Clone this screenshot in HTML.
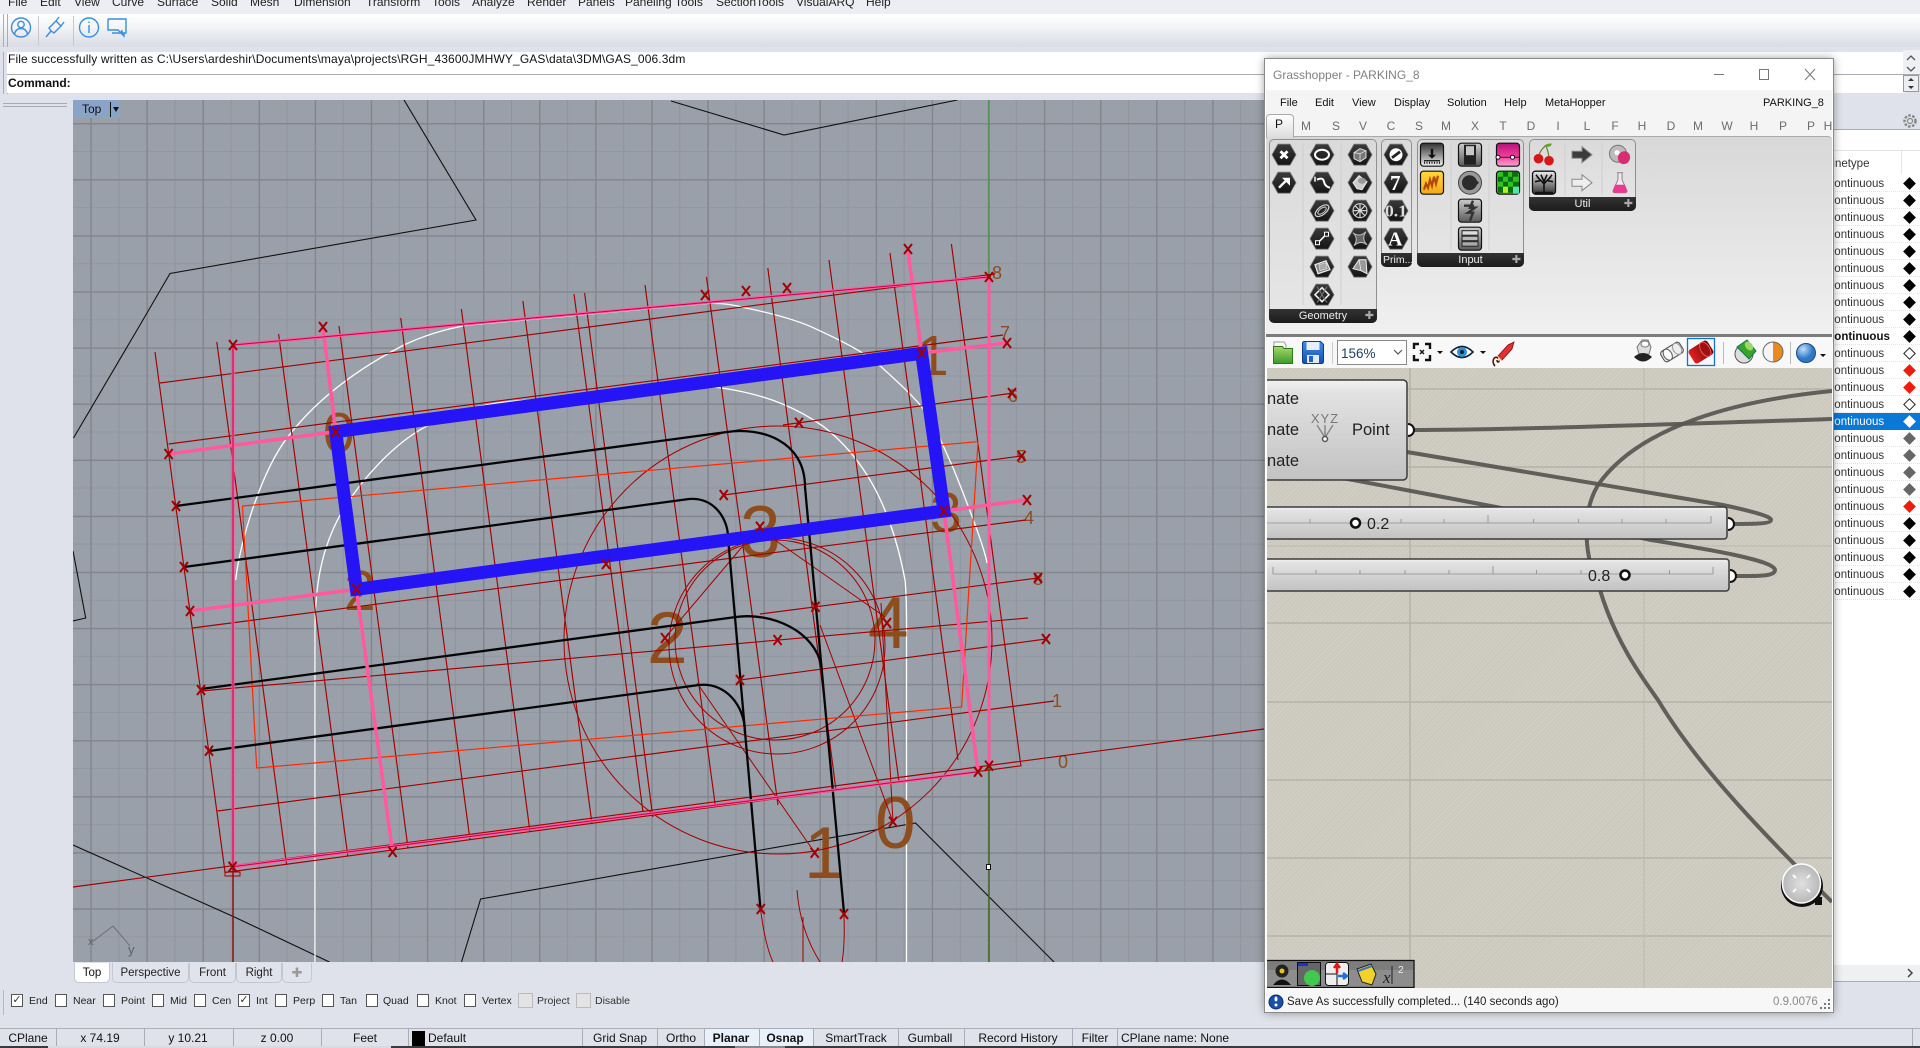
<!DOCTYPE html>
<html><head><meta charset="utf-8"><title>Rhino</title>
<style>
html,body{margin:0;padding:0;width:1920px;height:1048px;overflow:hidden;background:#dfe2ea;font-family:"Liberation Sans",sans-serif;font-size:12px;color:#111}
.a{position:absolute}
.t{position:absolute;white-space:nowrap;line-height:14px;height:14px}
.c{transform:translateX(-50%)}
.m{top:-5px;color:#222}
.cb{position:absolute;top:994px;width:12px;height:13px;border:1px solid #555;background:#fff;box-sizing:border-box;font-size:11px;line-height:11px;text-align:center;color:#333}
.cb.g{background:#e3e3e3;border-color:#bbb;width:15px;height:15px;top:993px}
.l{position:absolute;top:994px;font-size:10.5px;line-height:14px;white-space:nowrap;color:#222}
.s{position:absolute;top:1029px;width:1px;height:17px;background:#a9adb8}
.st{position:absolute;top:1031px;line-height:14px;white-space:nowrap;color:#111;transform:translateX(-50%)}
.r{position:absolute;left:1826px;width:94px;height:17px;box-sizing:border-box;border-bottom:1px dotted #e2e2e2;font-size:11.5px;line-height:19px;color:#333;white-space:nowrap}
.d{position:absolute;left:79px;top:4px;width:9px;height:9px;transform:rotate(45deg);box-sizing:border-box;background:#000}
.w{background:#fff;border:1px solid #222}.e{background:#f01b0c}.y{background:#666}
.tab{position:absolute;top:963px;height:20px;box-sizing:border-box;border:1px solid #c3c7d2;border-top:0;border-radius:0 0 5px 5px;text-align:center;line-height:21px;font-size:11.5px;color:#222;background:#e0e3ec}
.gt{position:absolute;top:119px;font-size:12px;line-height:14px;color:#6d6d6d;transform:translateX(-50%)}
.gm{position:absolute;top:96px;font-size:11px;line-height:14px;color:#111;white-space:nowrap}
.pn{position:absolute;box-sizing:border-box;border:1px solid #8f8f8f;border-radius:5px;background:linear-gradient(#dadada,#e6e6e6)}
.pf{position:absolute;left:-1px;right:-1px;bottom:-1px;height:14px;background:linear-gradient(#333,#1c1c1c);border-radius:0 0 5px 5px;color:#eee;font-size:11px;line-height:14px;text-align:center}
</style></head><body>

<!-- Menu -->
<div class="a" style="left:0;top:0;width:1920px;height:14px;background:#eceef3"></div>
<span class="t m" style="left:8px">File</span><span class="t m" style="left:40px">Edit</span><span class="t m" style="left:74px">View</span><span class="t m" style="left:112px">Curve</span><span class="t m" style="left:157px">Surface</span><span class="t m" style="left:211px">Solid</span><span class="t m" style="left:250px">Mesh</span><span class="t m" style="left:294px">Dimension</span><span class="t m" style="left:366px">Transform</span><span class="t m" style="left:432px">Tools</span><span class="t m" style="left:472px">Analyze</span><span class="t m" style="left:527px">Render</span><span class="t m" style="left:578px">Panels</span><span class="t m" style="left:625px">Paneling Tools</span><span class="t m" style="left:716px">SectionTools</span><span class="t m" style="left:796px">VisualARQ</span><span class="t m" style="left:866px">Help</span>

<!-- Toolbar -->
<div class="a" style="left:0;top:14px;width:1920px;height:33px;background:linear-gradient(#fff,#f3f4f7 40%,#d8dbe2)"></div>
<div class="a" style="left:3px;top:14px;width:3px;height:33px;border-left:1px solid #aab;border-right:1px solid #aab"></div>
<div class="a" style="left:38px;top:16px;width:1px;height:29px;background:#c5c8d0"></div>
<div class="a" style="left:73px;top:16px;width:1px;height:29px;background:#c5c8d0"></div>
<svg class="a" style="left:8px;top:14px" width="130" height="32" viewBox="8 14 130 32" fill="none" stroke="#3b8edb" stroke-width="1.4">
<circle cx="21" cy="27.5" r="9.5"/><circle cx="21" cy="24.5" r="3.2"/><path d="M14.5 34c1-4 3-5.500 6.500-5.500s5.500 1.500 6.500 5.500"/>
<path d="M46 37l5-6M51 31l-2-3 7-7 5 5-7 7zM56 21l3-4M61 26l3-4"/>
<circle cx="89" cy="27.500" r="9.500"/><path d="M89 25v8M89 21.500v1.500"/>
<path d="M108 19h18v14h-4v-2M108 19v11h10l3 3 1-3"/><path d="M112 33h9l3 3v-3"/></svg>

<!-- command -->
<div class="a" style="left:3px;top:52px;width:3px;height:42px;border-left:1px solid #aab;border-right:1px solid #aab"></div>
<div class="a" style="left:7px;top:52px;width:1898px;height:41px;background:#fff"></div>
<div class="a" style="left:7px;top:74px;width:1913px;height:1px;background:#a7abb6"></div>
<span class="t" style="left:8px;top:52px;letter-spacing:.12px">File successfully written as C:\Users\ardeshir\Documents\maya\projects\RGH_43600JMHWY_GAS\data\3DM\GAS_006.3dm</span>
<span class="t" style="left:8px;top:76px;font-weight:bold">Command:</span>
<svg class="a" style="left:1903px;top:50px" width="17" height="44" viewBox="0 0 17 44" fill="none" stroke="#555" stroke-width="1.300"><rect x="0" y="0" width="17" height="24" fill="#eef0f4" stroke="none"/><path d="M4 10l4-4 4 4M4 17l4 4 4-4"/><rect x="0.500" y="25.500" width="15" height="16" fill="#eceef2" stroke="#999" stroke-width="1"/><path d="M5 31l3-3 3 3z M5 36l3 3 3-3z" fill="#333" stroke="none"/></svg>

<!-- Viewport grip -->
<div class="a" style="left:3px;top:103px;width:64px;height:2px;border-top:1px solid #a7abb6;border-bottom:1px solid #a7abb6"></div>

<!-- Viewport -->
<div class="a" style="left:73px;top:100px;width:1195px;height:862px;overflow:hidden;background-color:#9aa0a9;background-image:linear-gradient(90deg,#83868f 1.500px,transparent 1.500px),linear-gradient(#83868f 1.500px,transparent 1.500px),linear-gradient(90deg,#8f939c 1px,transparent 1px),linear-gradient(#92969f 1px,transparent 1px);background-size:56.100px 56.100px;background-position:17.300px 0,0 23px,45.350px 0,0 51px">
<svg width="1195" height="862" viewBox="73 100 1195 862" style="position:absolute;left:0;top:0" fill="none">
<defs><path id="x" d="M-4-5L4 5M4-5L-4 5" stroke="#a00000" stroke-width="2"/></defs>
<!-- thin black -->
<g stroke="#111" stroke-width="1.100">
<path d="M404 100L476 220L170 273.500L140 325L73.500 438"/>
<path d="M671 101L784 135L957.500 100"/>
<path d="M73 551L85.700 618L73 621"/>
<path d="M73 845L233.800 916.700L329.400 962"/>
<path d="M461.500 962L480.600 899L915.500 823L1054 962"/>
</g>
<!-- axes -->
<path d="M989 100V277" stroke="#3f9a42" stroke-width="1.300"/>
<path d="M989 766V962" stroke="#3a6a20" stroke-width="1.500"/>
<path d="M233 867V962" stroke="#8c0f0f" stroke-width="1.500"/>
<!-- axis icon -->
<path d="M113 926L92 942M113 926L130 946" stroke="#6c7078" stroke-width="1"/>
<text x="88" y="945" font-size="11" font-family="Liberation Sans" fill="#5c6068">x</text><text x="128" y="954" font-size="13" font-family="Liberation Sans" fill="#5c6068">y</text>
<!-- white arcs -->
<g stroke="#fff" stroke-width="1.300">
<path d="M315 962V630C315 590 320 550 342 511.700C362 478 395 443 425.700 426.700C470 404 500 402 529 400C600 395 670 380 721.600 388C770 395 800 410 823.700 426.700C860 455 890 500 905 580C907 600 906.500 620 906.500 640V962"/>
<path d="M235.700 580C240 540 262 470 288 436.700C320 395 365 365 404 345C425 335 445 329 468.600 325L701 304C720 302 735 305 746 308C780 315 800 322 811 326.700C840 340 865 352 881 366.700C900 384 912 395 921.600 406.700C935 425 945 450 954 470C970 510 985 550 987 563"/>
</g>
<!-- digits -->
<g font-family="Liberation Sans" fill="#8c4d1f">
<g font-size="57"><text x="323" y="452">0</text><text x="917" y="375">1</text><text x="344" y="610">2</text><text x="930" y="532">3</text></g>
<g font-size="73"><text x="740" y="557">3</text><text x="647" y="663">2</text><text x="868" y="648">4</text><text x="804" y="878">1</text><text x="875" y="848">0</text></g>
<g font-size="18"><text x="992" y="279">8</text><text x="1000" y="339">7</text><text x="1008" y="402">6</text><text x="1016" y="463">5</text><text x="1024" y="524">4</text><text x="1033" y="585">8</text><text x="1052" y="707">1</text><text x="1058" y="768">0</text></g>
</g>
<!-- dark red grid -->
<g stroke="#a30000" stroke-width="1.150">
<path d="M160 383L995 274"/><path d="M168.600 444L1003 335"/><path d="M783 425L1013.500 393"/><path d="M723.700 495L1021.600 456"/><path d="M192.400 628L1025.700 520"/><path d="M201 691L1028 618"/><path d="M760 614L1038 578"/><path d="M740 680L1046 639"/><path d="M217.700 811L1054 701"/><path d="M73 887L1264 729"/><path d="M225 872.500L1021.600 765.700"/>
<path d="M155 352L225 872"/><path d="M216.800 342L286.600 865"/><path d="M278.600 334L347.800 856"/><path d="M339 326L408 848"/><path d="M400.700 318L470 840"/><path d="M461.400 309L530 832"/><path d="M522.900 301L592 824"/><path d="M574 294L643 812"/><path d="M584.600 293L652.800 817"/><path d="M645 285L715.500 807"/><path d="M706.500 277L778 805"/><path d="M767.800 268L836 790"/><path d="M829 260L899 782"/><path d="M890 253L958 760"/><path d="M951.400 244L1020.800 765"/>
<path d="M225 872H240V876H225Z" stroke-width="1"/>
<circle cx="778" cy="640" r="214" stroke-width="1"/><circle cx="777" cy="646" r="108" stroke-width="1"/><circle cx="775" cy="640" r="100" stroke-width="1"/>
<path d="M697 683L815 853M775 540L885 617M742 547L665 638M881 603L893 822M820 625L893 822" stroke-width="1"/>
<path d="M760.400 908Q765 945 773 962M844 915Q845 945 842 962M803 917V962M797 890Q800 930 820 962" stroke-width="1"/>
</g>
<!-- orange rectangle -->
<path d="M242.500 506L978 441.700L961.600 707L256.700 768Z" stroke="#ff2a00" stroke-width="1.200"/>
<!-- black thick -->
<g stroke="#050505" stroke-width="2.300" stroke-linejoin="round">
<path d="M175.700 506L727 432C760 427 805 440 805 487L844 913"/>
<path d="M184 567L689 499C715 497 728 520 728 537L760.400 908"/>
<path d="M201 689L736 617C770 612 815 630 821.600 667"/>
<path d="M209 751L699 685C725 682 745 705 745 733"/>
</g>
<!-- pink lines -->
<g stroke="#ff5a9e" stroke-width="3.600">
<path d="M323 327L335.700 431.700M356.400 589L392.600 852M907.800 250L921.600 353M944 511L978 771.700M168.600 454L335.700 431.700M190 611L356.400 589.300M921.600 353L1007 343M944 511L1025.700 500"/>
<path d="M233 345L989 277M232.600 866.700L978 771.700M989 277V766M233 345V867" stroke-width="3"/>
</g>
<g stroke="#c4004a" stroke-width="1"><path d="M233 345L989 277M232.600 866.700L978 771.700M233 345V867"/></g>
<!-- blue rectangle -->
<path d="M335.700 431.700L921.600 353.300L944 511L356.400 589.300Z" stroke="#2414f6" stroke-width="13" stroke-linejoin="miter"/>
<!-- crosses -->
<g><use href="#x" x="233" y="345"/><use href="#x" x="323" y="327"/><use href="#x" x="168.600" y="454"/><use href="#x" x="176" y="506"/><use href="#x" x="184" y="567"/><use href="#x" x="190" y="611"/><use href="#x" x="335.700" y="431.700"/><use href="#x" x="356.400" y="589"/><use href="#x" x="232.600" y="866.700"/><use href="#x" x="392.600" y="852"/><use href="#x" x="606" y="564"/><use href="#x" x="705" y="295"/><use href="#x" x="746" y="291"/><use href="#x" x="787" y="288"/><use href="#x" x="908" y="249"/><use href="#x" x="989" y="277"/><use href="#x" x="1007" y="343"/><use href="#x" x="921.600" y="353"/><use href="#x" x="1012" y="393"/><use href="#x" x="799" y="422.700"/><use href="#x" x="1021.600" y="456"/><use href="#x" x="723.700" y="495"/><use href="#x" x="944" y="511"/><use href="#x" x="1027" y="500"/><use href="#x" x="1038" y="578"/><use href="#x" x="815.500" y="606.700"/><use href="#x" x="887" y="623"/><use href="#x" x="760" y="526.700"/><use href="#x" x="665" y="638"/><use href="#x" x="777.600" y="640"/><use href="#x" x="740" y="680"/><use href="#x" x="1046" y="639"/><use href="#x" x="989" y="765.700"/><use href="#x" x="978" y="771.700"/><use href="#x" x="893" y="821.700"/><use href="#x" x="814.700" y="852.700"/><use href="#x" x="760.800" y="909"/><use href="#x" x="844" y="914"/><use href="#x" x="201" y="690"/><use href="#x" x="209" y="750.700"/></g>
<rect x="986.500" y="864.500" width="4" height="5" fill="#fff" stroke="#111" stroke-width="1"/>
</svg>
<div class="a" style="left:0;top:0;width:47px;height:18px;background:#8aa4c8"></div>
<span class="t" style="left:9px;top:2px;color:#111">Top</span>
<div class="a" style="left:37px;top:2px;width:1px;height:15px;background:#111"></div>
<div class="a" style="left:40px;top:7px;border:3.500px solid transparent;border-top:5px solid #111"></div>
</div>

<!-- viewport tabs -->
<div class="tab" style="left:74px;width:36px;background:#fff;color:#111">Top</div>
<div class="tab" style="left:112px;width:77px">Perspective</div>
<div class="tab" style="left:189px;width:47px">Front</div>
<div class="tab" style="left:236px;width:46px">Right</div>
<div class="tab" style="left:282px;width:30px;font-size:13px;line-height:20px;color:#999">✚</div>

<!-- osnap -->
<div class="a" style="left:3px;top:990px;width:2px;height:25px;border-left:1px solid #b5b8c2"></div>
<div class="cb" style="left:11px">✓</div><span class="l" style="left:29px">End</span>
<div class="cb" style="left:55px"></div><span class="l" style="left:73px">Near</span>
<div class="cb" style="left:103px"></div><span class="l" style="left:121px">Point</span>
<div class="cb" style="left:152px"></div><span class="l" style="left:170px">Mid</span>
<div class="cb" style="left:194px"></div><span class="l" style="left:212px">Cen</span>
<div class="cb" style="left:238px">✓</div><span class="l" style="left:256px">Int</span>
<div class="cb" style="left:275px"></div><span class="l" style="left:293px">Perp</span>
<div class="cb" style="left:322px"></div><span class="l" style="left:340px">Tan</span>
<div class="cb" style="left:366px"></div><span class="l" style="left:383px">Quad</span>
<div class="cb" style="left:417px"></div><span class="l" style="left:435px">Knot</span>
<div class="cb" style="left:464px"></div><span class="l" style="left:482px">Vertex</span>
<div class="cb g" style="left:518px"></div><span class="l" style="left:537px;color:#333">Project</span>
<div class="cb g" style="left:576px"></div><span class="l" style="left:595px;color:#333">Disable</span>

<!-- status bar -->
<div class="a" style="left:0;top:1028px;width:1920px;height:1px;background:#a9adb8"></div>
<div class="a" style="left:704px;top:1029px;width:109px;height:17px;background:#e8f1fa"></div>
<div class="s" style="left:56px"></div><div class="s" style="left:144px"></div><div class="s" style="left:233px"></div><div class="s" style="left:321px"></div><div class="s" style="left:408px"></div><div class="s" style="left:582px"></div><div class="s" style="left:657px"></div><div class="s" style="left:704px"></div><div class="s" style="left:759px"></div><div class="s" style="left:813px"></div><div class="s" style="left:898px"></div><div class="s" style="left:964px"></div><div class="s" style="left:1072px"></div><div class="s" style="left:1117px"></div><div class="s" style="left:1912px"></div>
<span class="st" style="left:28px">CPlane</span><span class="st" style="left:100px">x 74.19</span><span class="st" style="left:188px">y 10.21</span><span class="st" style="left:277px">z 0.00</span><span class="st" style="left:365px">Feet</span>
<div class="a" style="left:412px;top:1031px;width:13px;height:15px;background:#000"></div>
<span class="st" style="left:428px;transform:none">Default</span>
<span class="st" style="left:620px">Grid Snap</span><span class="st" style="left:681px">Ortho</span><span class="st" style="left:731px;font-weight:bold">Planar</span><span class="st" style="left:785px;font-weight:bold">Osnap</span><span class="st" style="left:856px">SmartTrack</span><span class="st" style="left:930px">Gumball</span><span class="st" style="left:1018px">Record History</span><span class="st" style="left:1095px">Filter</span><span class="st" style="left:1121px;transform:none">CPlane name: None</span>
<div class="a" style="left:0;top:1046px;width:1920px;height:2px;background:#3a3a3c"></div>
<div class="a" style="left:48px;top:1046px;width:343px;height:2px;background:#d8dae0"></div>
<div class="a" style="left:735px;top:1046px;width:50px;height:2px;background:#8a8a8c"></div>

<!-- Right panel -->
<div class="a" style="left:1820px;top:129px;width:100px;height:1px;background:#a9adb8"></div>
<div class="a" style="left:1820px;top:130px;width:100px;height:851px;background:#fff"></div>
<div class="a" style="left:1820px;top:150px;width:100px;height:1px;background:#e4e4e4"></div>
<div class="a" style="left:1901px;top:150px;width:1px;height:24px;background:#e4e4e4"></div>
<div class="a" style="left:1820px;top:965px;width:100px;height:16px;background:#eff0f1"></div>
<div class="a" style="left:1820px;top:981px;width:100px;height:1px;background:#a9adb8"></div>
<svg class="a" style="left:1905px;top:968px" width="10" height="10" fill="none" stroke="#444" stroke-width="1.500"><path d="M3 1l4 4-4 4"/></svg>
<svg class="a" style="left:1902px;top:113px" width="16" height="16" fill="none" stroke="#888" stroke-width="1.200"><circle cx="8" cy="8" r="2.500"/><circle cx="8" cy="8" r="5.500" stroke-dasharray="2.500 1.500" stroke-width="2.500"/></svg>
<span class="t" style="left:1826px;top:157px;font-size:11.5px;color:#333">Linetype</span>
<div class="r" style="top:175px">Continuous<i class="d"></i></div>
<div class="r" style="top:192px">Continuous<i class="d"></i></div>
<div class="r" style="top:209px">Continuous<i class="d"></i></div>
<div class="r" style="top:226px">Continuous<i class="d"></i></div>
<div class="r" style="top:243px">Continuous<i class="d"></i></div>
<div class="r" style="top:260px">Continuous<i class="d"></i></div>
<div class="r" style="top:277px">Continuous<i class="d"></i></div>
<div class="r" style="top:294px">Continuous<i class="d"></i></div>
<div class="r" style="top:311px">Continuous<i class="d"></i></div>
<div class="r" style="top:328px;font-weight:bold;color:#111">Continuous<i class="d"></i></div>
<div class="r" style="top:345px">Continuous<i class="d w"></i></div>
<div class="r" style="top:362px">Continuous<i class="d e"></i></div>
<div class="r" style="top:379px">Continuous<i class="d e"></i></div>
<div class="r" style="top:396px">Continuous<i class="d w"></i></div>
<div class="r" style="top:413px;background:#0a78d7;color:#fff;border:0">Continuous<i class="d" style="background:#fff"></i></div>
<div class="r" style="top:430px">Continuous<i class="d y"></i></div>
<div class="r" style="top:447px">Continuous<i class="d y"></i></div>
<div class="r" style="top:464px">Continuous<i class="d y"></i></div>
<div class="r" style="top:481px">Continuous<i class="d y"></i></div>
<div class="r" style="top:498px">Continuous<i class="d e"></i></div>
<div class="r" style="top:515px">Continuous<i class="d"></i></div>
<div class="r" style="top:532px">Continuous<i class="d"></i></div>
<div class="r" style="top:549px">Continuous<i class="d"></i></div>
<div class="r" style="top:566px">Continuous<i class="d"></i></div>
<div class="r" style="top:583px">Continuous<i class="d"></i></div>

<!-- Grasshopper window -->
<div class="a" style="left:1265px;top:59px;width:568px;height:953px;background:#fff;box-shadow:0 0 9px rgba(0,0,0,.45);outline:1px solid #8a8a8a"></div>
<span class="t" style="left:1273px;top:68px;color:#808080;font-size:12px">Grasshopper - PARKING_8</span>
<svg class="a" style="left:1710px;top:62px" width="112" height="24" fill="none" stroke="#777" stroke-width="1"><path d="M4 12.500H14"/><rect x="49.500" y="7.500" width="9" height="10"/><path d="M95 7l10 11M105 7L95 18"/></svg>
<div class="a" style="left:1266px;top:90px;width:566px;height:24px;background:#f4f4f4"></div>
<span class="gm" style="left:1280px">File</span><span class="gm" style="left:1315px">Edit</span><span class="gm" style="left:1352px">View</span><span class="gm" style="left:1394px">Display</span><span class="gm" style="left:1447px">Solution</span><span class="gm" style="left:1504px">Help</span><span class="gm" style="left:1545px">MetaHopper</span><span class="gm" style="left:1763px">PARKING_8</span>
<div class="a" style="left:1266px;top:114px;width:566px;height:22px;background:#f4f4f4"></div>
<div class="a" style="left:1266px;top:136px;width:566px;height:199px;background:linear-gradient(#d8d8d8,#f0f0f0);border-top:1px solid #aaa;box-sizing:border-box;border-radius:4px 4px 0 0"></div>
<div class="a" style="left:1266px;top:114px;width:28px;height:24px;border:1px solid #aaa;border-bottom:0;border-radius:4px 4px 0 0;box-sizing:border-box;background:linear-gradient(#fff,#dcdcdc)"></div>
<span class="gt" style="left:1279px;top:117px;color:#111">P</span>
<span class="gt" style="left:1306px">M</span><span class="gt" style="left:1336px">S</span><span class="gt" style="left:1363px">V</span><span class="gt" style="left:1391px">C</span><span class="gt" style="left:1419px">S</span><span class="gt" style="left:1446px">M</span><span class="gt" style="left:1475px">X</span><span class="gt" style="left:1503px">T</span><span class="gt" style="left:1531px">D</span><span class="gt" style="left:1558px">I</span><span class="gt" style="left:1587px">L</span><span class="gt" style="left:1615px">F</span><span class="gt" style="left:1642px">H</span><span class="gt" style="left:1671px">D</span><span class="gt" style="left:1698px">M</span><span class="gt" style="left:1727px">W</span><span class="gt" style="left:1754px">H</span><span class="gt" style="left:1783px">P</span><span class="gt" style="left:1811px">P</span><span class="gt" style="left:1828px">H</span>

<div class="pn" style="left:1269px;top:139px;width:108px;height:184px"><div class="pf">Geometry<span style="position:absolute;right:3px;top:0;color:#aaa">✚</span></div></div>
<div class="pn" style="left:1381px;top:139px;width:31px;height:128px"><div class="pf" style="text-align:left;padding-left:2px;font-size:10.500px">Prim...</div></div>
<div class="pn" style="left:1417px;top:139px;width:107px;height:128px"><div class="pf">Input<span style="position:absolute;right:3px;top:0;color:#aaa">✚</span></div></div>
<div class="pn" style="left:1529px;top:139px;width:107px;height:72px"><div class="pf">Util<span style="position:absolute;right:3px;top:0;color:#aaa">✚</span></div></div>

<svg class="a" style="left:1265px;top:136px" width="568" height="232" viewBox="1265 136 568 232" fill="none">
<defs>
<linearGradient id="hg" x1="0" y1="0" x2="0" y2="1"><stop offset="0" stop-color="#3a3a3a"/><stop offset="1" stop-color="#141414"/></linearGradient>
<linearGradient id="sq" x1="0" y1="0" x2="0" y2="1"><stop offset="0" stop-color="#cdcdcd"/><stop offset="1" stop-color="#5a5a5a"/></linearGradient>
<linearGradient id="sq2" x1="0" y1="0" x2="0" y2="1"><stop offset="0" stop-color="#eee"/><stop offset="1" stop-color="#333"/></linearGradient>
<linearGradient id="pk" x1="0" y1="0" x2="0" y2="1"><stop offset="0" stop-color="#b01678"/><stop offset=".5" stop-color="#f0359a"/><stop offset="1" stop-color="#f8a0d0"/></linearGradient>
<linearGradient id="yl" x1="0" y1="0" x2="0" y2="1"><stop offset="0" stop-color="#ffd93a"/><stop offset="1" stop-color="#f5a81a"/></linearGradient>
<linearGradient id="fg" x1="0" y1="0" x2="0" y2="1"><stop offset="0" stop-color="#a6d872"/><stop offset="1" stop-color="#3c9a2a"/></linearGradient>
<linearGradient id="bl" x1="0" y1="0" x2="0" y2="1"><stop offset="0" stop-color="#3f8fe6"/><stop offset="1" stop-color="#154fb0"/></linearGradient>
<linearGradient id="rd" x1="0" y1="0" x2="1" y2="0"><stop offset="0" stop-color="#e42020"/><stop offset="1" stop-color="#6c0808"/></linearGradient>
<linearGradient id="org" x1="0" y1="0" x2="1" y2="0"><stop offset=".5" stop-color="#f4f4f4"/><stop offset=".5" stop-color="#e98a20"/></linearGradient>
<radialGradient id="blb" cx=".35" cy=".3"><stop offset="0" stop-color="#bfe0fa"/><stop offset="1" stop-color="#2f78c8"/></radialGradient>
<polygon id="h" points="-6,-10.500 6,-10.500 12,0 6,10.500 -6,10.500 -12,0" fill="url(#hg)" stroke="#777" stroke-width=".8"/>
<rect id="q" x="-11.500" y="-11.500" width="23" height="23" rx="3" fill="url(#sq)" stroke="#111" stroke-width="1.200"/>
</defs>
<!-- column separators -->
<path d="M1303 143V305M1341 143V305M1451 143V250M1489 143V250M1565 143V195M1602 143V195" stroke="#cfcfcf"/>
<!-- hexes geometry -->
<g transform="translate(1284,154.700)"><use href="#h"/><path d="M-3.500-3.500L3.500 3.500M3.500-3.500L-3.500 3.500" stroke="#fff" stroke-width="2.800"/></g>
<g transform="translate(1284,182.700)"><use href="#h"/><path d="M-5 5L3-3" stroke="#fff" stroke-width="2.400"/><path d="M-2-5H6V3Z" fill="#fff"/></g>
<g transform="translate(1322,154.700)"><use href="#h"/><ellipse rx="7" ry="5" stroke="#fff" stroke-width="2"/></g>
<g transform="translate(1322,182.700)"><use href="#h"/><path d="M-5-3Q1-6 2-1Q3 4 8 5" stroke="#fff" stroke-width="2"/><path d="M-7-6V-1" stroke="#fff" stroke-width="1.500"/></g>
<g transform="translate(1322,210.700)"><use href="#h"/><ellipse rx="8" ry="4" transform="rotate(-38)" stroke="#ccc" stroke-width="1.300"/><ellipse rx="5" ry="2.300" transform="rotate(-38)" stroke="#ccc" stroke-width="1"/></g>
<g transform="translate(1322,238.700)"><use href="#h"/><path d="M-4 4L4-4" stroke="#fff" stroke-width="1.500"/><rect x="-6.500" y="2" width="4" height="4" fill="#222" stroke="#fff"/><rect x="2.500" y="-6.500" width="4" height="4" fill="#222" stroke="#fff"/></g>
<g transform="translate(1322,266.700)"><use href="#h"/><path d="M-7-2L4-6L8 3L-4 7Z" fill="#888" stroke="#eee" stroke-width="1.200"/><path d="M-3-2L4-4L5 2L-2 4Z" fill="#aaa" stroke="#ddd" stroke-width=".7"/></g>
<g transform="translate(1322,294.700)"><use href="#h"/><path d="M0-7L7 0L0 7L-7 0Z" stroke="#eee" stroke-width="1.600"/><path d="M-5 8L5-8M-5-8L5 8" stroke="#777" stroke-width="1"/></g>
<g transform="translate(1360,154.700)"><use href="#h"/><path d="M-6-2L0-6L6-4V3L0 7L-6 4Z" fill="#777" stroke="#ddd"/><path d="M-6-2L0-1L6-4M0-1V7" stroke="#ddd" stroke-width=".8"/></g>
<g transform="translate(1360,182.700)"><use href="#h"/><path d="M-7 0L-1-7L7-1L2 7L-3 6Z" fill="#ccc" stroke="#eee"/><ellipse cx="2" cy="-2" rx="4" ry="3" fill="#999"/></g>
<g transform="translate(1360,210.700)"><use href="#h"/><circle r="7" stroke="#ccc" stroke-width="1.100"/><path d="M-7 0H7M0-7V7M-5-5L5 5M5-5L-5 5" stroke="#ddd" stroke-width="1.100"/></g>
<g transform="translate(1360,238.700)"><use href="#h"/><path d="M-7-6Q-1-1 6-7Q1 0 7 6Q0 1-6 7Q-1 0-7-6Z" fill="#666" stroke="#bbb"/></g>
<g transform="translate(1360,266.700)"><use href="#h"/><path d="M-7 2L-1-7H6L7 7L1 4Z" fill="#999" stroke="#eee"/><path d="M-1-7L1 4" stroke="#eee" stroke-width=".8"/></g>
<!-- prim -->
<g transform="translate(1396,154.700)"><use href="#h"/><circle r="6.500" fill="#fff"/><path d="M-4 3L4-3" stroke="#222" stroke-width="2.800"/></g>
<g transform="translate(1396,182.700)"><use href="#h"/><text x="-6" y="7.500" font-family="Liberation Serif" font-size="21" font-weight="bold" fill="#fff">7</text></g>
<g transform="translate(1396,210.700)"><use href="#h"/><text x="-11" y="6" font-family="Liberation Serif" font-size="17" font-weight="bold" fill="#ddd" textLength="22" lengthAdjust="spacingAndGlyphs">0.1</text></g>
<g transform="translate(1396,238.700)"><use href="#h"/><text x="-8" y="7" font-family="Liberation Serif" font-size="20" font-weight="bold" fill="#fff">A</text></g>
<!-- input -->
<g transform="translate(1432,154.700)"><rect x="-11.500" y="-11.500" width="23" height="23" rx="3" fill="url(#sq2)" transform="rotate(180)" stroke="#111" stroke-width="1.200"/><path d="M0-6V1" stroke="#111" stroke-width="2.500"/><path d="M-4 0H4L0 4Z" fill="#111"/><path d="M-8 6H8" stroke="#111" stroke-width="1.200"/><path d="M-8 8H8" stroke="#111" stroke-width="2" stroke-dasharray="1 1.500"/></g>
<g transform="translate(1432,182.700)"><rect x="-11.500" y="-11.500" width="23" height="23" rx="3" fill="url(#yl)" stroke="#111" stroke-width="1.200"/><path d="M-8 7L-6 1L-4 5L-2-3L0 3L2-6L4 1L6-7" stroke="#b34a0d" stroke-width="2.200"/></g>
<g transform="translate(1470,154.700)"><use href="#q"/><rect x="-6" y="-10" width="12" height="20" fill="#222"/><rect x="-4" y="-8.500" width="8" height="9" fill="#c8c8c8"/></g>
<g transform="translate(1470,182.700)"><circle r="11.500" fill="#999" stroke="#444"/><circle cx="-.5" r="7.500" fill="#2c2c2c"/><path d="M5-4L9 0L5 4Z" fill="#2c2c2c"/></g>
<g transform="translate(1470,210.700)"><use href="#q"/><path d="M-6-5H4M3-10L0-3H5L-2 2H3L0 10" stroke="#333" stroke-width="2.400"/></g>
<g transform="translate(1470,238.700)"><use href="#q"/><rect x="-8" y="-8" width="16" height="4.500" fill="#ddd" stroke="#222"/><rect x="-8" y="-2.500" width="16" height="4.500" fill="#bbb" stroke="#222"/><rect x="-8" y="3" width="16" height="4.500" fill="#aaa" stroke="#222"/></g>
<g transform="translate(1508,154.700)"><rect x="-11.500" y="-11.500" width="23" height="23" rx="3" fill="url(#pk)" stroke="#111" stroke-width="1.200"/><path d="M-11 2.500H11" stroke="#222"/><circle cx="-10" cy="2.500" r="2" fill="#fff" stroke="#111"/><circle cx="4.500" cy="2.500" r="2" fill="#fff" stroke="#111"/></g>
<g transform="translate(1508,182.700)"><rect x="-11.500" y="-11.500" width="23" height="23" rx="3" fill="#2ec41e" stroke="#111" stroke-width="1.200"/><path d="M-5-11h5v5h-5zM4-11h6v5h-6zM-10-6h5v5h-5zM0-6h5v5h-5zM-5-1h5v5h-5zM5-1h6v5h-6zM-10 4h5v6h-5zM0 4h5v6h-5z" fill="#0b6d12"/><path d="M5 4h6v7h-6z" fill="#50e8b0"/><path d="M-5 4h5v6h-5z" fill="#b4f020"/></g>
<!-- util -->
<g transform="translate(1544,154.700)"><circle cx="-5.500" cy="4" r="4.800" fill="#d81818"/><circle cx="5" cy="6" r="4.800" fill="#d81818"/><path d="M-5 0Q-2-7 2-9Q4-4 5 2" stroke="#5a7a2a" stroke-width="1.100"/><path d="M0-9Q4-12 8-11Q6-6 0-9" fill="#6aa02a"/></g>
<g transform="translate(1582,154.700)"><path d="M-10-3.500H0V-8L10 0L0 8V3.500H-10Z" fill="#3c3c3c" stroke="#888"/></g>
<g transform="translate(1620,154.700)"><circle cx="-2" cy="-1" r="8.500" fill="#bbb" stroke="#777"/><circle cx="-3" cy="-2" r="2.500" fill="#fff"/><ellipse cx="4" cy="3" rx="6" ry="6.500" transform="rotate(25 4 3)" fill="#d92d72"/></g>
<g transform="translate(1544,182.700)"><rect x="-11.500" y="-11.500" width="23" height="23" rx="3" fill="url(#sq2)" stroke="#111" stroke-width="1.300"/><path d="M0 9V-1M0 1L-7-6M0 1L7-6M0-1L-3-8M0-1L3-8M-4-2L-9-1M4-2L9-1M-5-4L-8-8M5-4L8-8" stroke="#111" stroke-width="1.600"/><path d="M-9 9H9V11H-9Z" fill="#111"/></g>
<g transform="translate(1582,182.700)"><path d="M-10-3.500H0V-8L10 0L0 8V3.500H-10Z" fill="#eee" stroke="#888"/></g>
<g transform="translate(1620,182.700)"><path d="M-3-10H3M-2-10V-3L-7 8Q-7 10-5 10H5Q7 10 7 8L2-3V-10" fill="#f5e8ef" stroke="#888"/><path d="M-5 2H5L7 8Q7 10 5 10H-5Q-7 10-7 8Z" fill="#e83a90"/></g>

<!-- toolbar -->
<rect x="1266" y="337" width="566" height="31" fill="#f8f8f8"/>
<rect x="1266" y="334" width="566" height="3" fill="#7c7c7c"/>
<path d="M1274 342h10l2 3v6h-12z" fill="#fff" stroke="#999"/>
<path d="M1273.500 363.500V346.500h9l1.500 2h8.500v15z" fill="url(#fg)" stroke="#2a7a1a"/>
<path d="M1302.500 343.500q0-2 2-2h16l3 3v17q0 2-2 2h-17q-2 0-2-2z" fill="url(#bl)" stroke="#0c3c90"/><rect x="1306.500" y="342" width="13" height="8" fill="#e8eef6"/><rect x="1307" y="355" width="12" height="8" fill="#dfe9f7"/><rect x="1309" y="356" width="4" height="6" fill="#1c62c9"/>
<path d="M1332.500 342v22" stroke="#ccc"/>
<rect x="1337.500" y="340.500" width="69" height="24" fill="#fff" stroke="#8a8a8a"/>
<text x="1341" y="358" font-family="Liberation Sans" font-size="13.500" fill="#23405e">156%</text>
<path d="M1394 350l4 4 4-4" stroke="#555" stroke-width="1.200"/>
<path d="M1414 349v-5h5M1425 344h5v5M1430 355v5h-5M1419 360h-5v-5" stroke="#111" stroke-width="2.400"/><path d="M1420 350l4 4m0-4l-4 4" stroke="#111" stroke-width="1.400"/>
<path d="M1437 351h6l-3 3zM1480 351h6l-3 3zM1820 354h6l-3 3z" fill="#111"/>
<path d="M1451 352Q1462 341 1473 352Q1462 363 1451 352Z" fill="#fff" stroke="#123" stroke-width="1.600"/><circle cx="1462" cy="352" r="5" fill="#2f8fd6"/><circle cx="1462" cy="352" r="2" fill="#0a2030"/>
<path d="M1495 366C1491 362 1494 355 1498 358C1501 361 1497 364 1497 360" stroke="#4a1408" stroke-width="1.600"/>
<path d="M1498 356L1508 345L1514 342L1512 349L1502 360Z" fill="#e33030" stroke="#7a1010" stroke-width=".8"/><path d="M1498 356L1502 360L1498 361Z" fill="#f4d0b0"/>
<path d="M1637 347L1642 340H1648L1651 347L1649 354H1639Z" fill="#ddd" stroke="#777"/><ellipse cx="1645" cy="344" rx="4" ry="3" fill="#fff" stroke="#777"/>
<path d="M1634 357Q1643 349 1652 357Q1643 366 1634 357Z" fill="#222"/>
<g transform="rotate(-32 1672 352)"><rect x="1661" y="346" width="22" height="12" rx="3" fill="#eee" stroke="#555" stroke-width="1.100"/><ellipse cx="1667" cy="352" rx="4" ry="6" fill="#fff" stroke="#555"/><ellipse cx="1678" cy="352" rx="4" ry="6" fill="none" stroke="#999"/></g>
<rect x="1687.500" y="338.500" width="27" height="27" fill="#f4f8fc" stroke="#1472c8" stroke-width="1.300"/>
<g transform="rotate(-32 1701 352)"><rect x="1690" y="344" width="22" height="16" rx="3" fill="url(#rd)"/><ellipse cx="1706" cy="352" rx="4.500" ry="8" fill="#a01010" stroke="#e85a5a"/></g>
<path d="M1723.500 342v22" stroke="#bbb"/>
<circle cx="1744" cy="354" r="9" fill="#ddd" stroke="#555"/><path d="M1737 347L1749 359L1756 351L1747 340Z" fill="#38a428" stroke="#175"/><ellipse cx="1749" cy="346" rx="3.500" ry="5" transform="rotate(-40 1749 346)" fill="#9ad86a"/>
<circle cx="1773" cy="352" r="10" fill="url(#org)" stroke="#666"/>
<path d="M1790.500 342v22" stroke="#bbb"/>
<circle cx="1806" cy="353" r="9.500" fill="url(#blb)" stroke="#1c4a80"/>
</svg>

<!-- Canvas -->
<div class="a" style="left:1267px;top:368px;width:565px;height:620px;overflow:hidden;background:repeating-linear-gradient(135deg,#d1cec6 0 1.500px,#cac7bd 1.500px 3px)">
<svg width="565" height="620" viewBox="1267 368 565 620" style="position:absolute;left:0;top:0" fill="none">
<defs>
<linearGradient id="ng" x1="0" y1="0" x2="0" y2="1"><stop offset="0" stop-color="#f2f2f2"/><stop offset=".12" stop-color="#e2e2e2"/><stop offset="1" stop-color="#c2c2c2"/></linearGradient>
<radialGradient id="pg"><stop offset="0" stop-color="#e0e0e0"/><stop offset="1" stop-color="#b8b8b8"/></radialGradient>
</defs>
<g stroke="#b5b2a7" stroke-width="1.500"><path d="M1410 368V988M1267 389H1832M1267 467H1832M1267 623H1832M1267 702H1832M1267 780H1832M1267 858H1832M1267 936H1832"/></g>
<path d="M1644 368V988M1267 546H1832" stroke="#bcb9ae" stroke-width="1"/>
<g stroke="#575651" stroke-width="4" stroke-opacity=".93">
<path d="M1411 430C1500 430 1650 425 1832 419"/>
<path d="M1832 391C1740 400 1640 425 1598 485C1580 515 1585 560 1600 590C1615 640 1640 675 1658 700C1700 770 1770 840 1832 902"/>
<path d="M1407 452L1723 505C1760 513 1771 517 1771 520C1771 524 1750 524 1730 524"/>
<path d="M1300 470L1496 507L1651 540C1700 548 1775 560 1775 570C1775 577 1755 576 1732 576"/>
</g>
<!-- xyz component -->
<rect x="1240" y="380" width="167" height="100" rx="4" fill="url(#ng)" stroke="#3b3b3b" stroke-width="1.500"/>
<g font-family="Liberation Sans" font-size="16.500" fill="#222"><text x="1267" y="404">nate</text><text x="1267" y="435">nate</text><text x="1267" y="466">nate</text><text x="1352" y="435">Point</text></g>
<text x="1325" y="423" text-anchor="middle" font-family="Liberation Sans" font-size="13" letter-spacing="1" fill="#777">XYZ</text>
<path d="M1317 425L1324 436M1325 425V436M1333 425L1326 436" stroke="#888" stroke-width="1.500"/><circle cx="1325" cy="439" r="2.500" fill="#fff" stroke="#555" stroke-width="1.500"/>
<path d="M1408 424A6 6 0 0 1 1408 436" fill="#fff" stroke="#111" stroke-width="2"/>
<!-- sliders -->
<rect x="1240" y="507" width="487" height="32" rx="3" fill="url(#ng)" stroke="#3b3b3b" stroke-width="1.500"/>
<path d="M1267 523H1711" stroke="#aaa" stroke-width="1.300"/>
<path d="M1310 519v4M1401 519v4M1444 519v4M1488 515v8M1533.600 519v4M1578.600 519v4M1622 519v4M1666 519v4M1711 516v7" stroke="#999"/>
<circle cx="1355.500" cy="523" r="4.500" fill="#fff" stroke="#111" stroke-width="2.500"/>
<text x="1367" y="529" font-family="Liberation Sans" font-size="16" fill="#222">0.2</text>
<path d="M1728 518A6 6 0 0 1 1728 530" fill="#fff" stroke="#111" stroke-width="2"/>
<rect x="1240" y="559" width="489" height="32" rx="3" fill="url(#ng)" stroke="#3b3b3b" stroke-width="1.500"/>
<path d="M1273 574H1713" stroke="#aaa" stroke-width="1.300"/>
<path d="M1273 567v7M1316 570v4M1360 570v4M1405 570v4M1449 570v4M1493 566v8M1536.500 570v4M1581 570v4M1669.500 570v4M1713 567v7" stroke="#999"/>
<text x="1588" y="581" font-family="Liberation Sans" font-size="16" fill="#222">0.8</text>
<circle cx="1625" cy="575" r="4.500" fill="#fff" stroke="#111" stroke-width="2.500"/>
<path d="M1730 570A6 6 0 0 1 1730 582" fill="#fff" stroke="#111" stroke-width="2"/>
<!-- param -->
<circle cx="1802" cy="886" r="21" fill="#111"/><rect x="1815" y="897" width="7" height="8" fill="#111"/>
<ellipse cx="1801.500" cy="883.500" rx="19" ry="19.500" fill="url(#pg)" stroke="#fff" stroke-width="1.500"/>
<path d="M1793 875l3 3M1810 875l-3 3M1793 892l3-3M1810 892l-3-3" stroke="#fff" stroke-width="2"/>
<!-- widget -->
<rect x="1266" y="960.500" width="148" height="27" fill="#8d8d8d" stroke="#111" stroke-width="1.300"/>
<rect x="1266" y="961" width="147" height="9" fill="#666" opacity=".4"/>
<circle cx="1282" cy="971" r="6.500" fill="#222"/><circle cx="1282" cy="971" r="2.500" fill="#e8c21a"/><path d="M1273 985Q1282 974 1291 985Z" fill="#111"/>
<rect x="1297.500" y="962.500" width="23" height="23" fill="#666" stroke="#111"/><rect x="1298" y="963" width="10" height="3" fill="#1a30e0"/><circle cx="1312" cy="978" r="8" fill="#40c850"/>
<rect x="1325.500" y="962.500" width="23" height="23" rx="3" fill="#eee" stroke="#111"/><path d="M1326 974H1337V963M1337 974V985" stroke="#111"/><path d="M1337 973V965M1334 968L1337 964L1340 968" stroke="#e01818" stroke-width="2.500"/><path d="M1338 976H1346M1343 973L1347 976L1343 979" stroke="#1c70e0" stroke-width="2.500"/>
<path d="M1357 969L1371 964L1376 974L1372 985L1362 982Z" fill="#f1d22a" stroke="#222"/><path d="M1358 971L1372 966" stroke="#3f6fd0" stroke-width="2"/>
<text x="1383" y="983" font-family="Liberation Serif" font-style="italic" font-size="17" fill="#222">x</text><path d="M1392 966V984" stroke="#222"/><text x="1398" y="973" font-family="Liberation Sans" font-size="10" fill="#eee">2</text>
</svg>
</div>

<!-- status GH -->
<div class="a" style="left:1266px;top:988px;width:566px;height:24px;background:#f7f7f7"></div>
<svg class="a" style="left:1268px;top:994px" width="16" height="16"><circle cx="8" cy="8" r="7" fill="#1c4fa8" stroke="#0c2c70"/><ellipse cx="8" cy="5" rx="1.500" ry="2.500" fill="#fff"/><circle cx="8" cy="11" r="1.500" fill="#fff"/></svg>
<span class="t" style="left:1287px;top:995px;font-size:11.500px;color:#222">Save As successfully completed... (140 seconds ago)</span>
<span class="t" style="left:1773px;top:995px;font-size:11.500px;color:#8a8a8a">0.9.0076</span>
<svg class="a" style="left:1819px;top:998px" width="12" height="12" fill="#777"><rect x="9" y="1" width="2" height="2"/><rect x="5" y="5" width="2" height="2"/><rect x="9" y="5" width="2" height="2"/><rect x="1" y="9" width="2" height="2"/><rect x="5" y="9" width="2" height="2"/><rect x="9" y="9" width="2" height="2"/></svg>
</body></html>
